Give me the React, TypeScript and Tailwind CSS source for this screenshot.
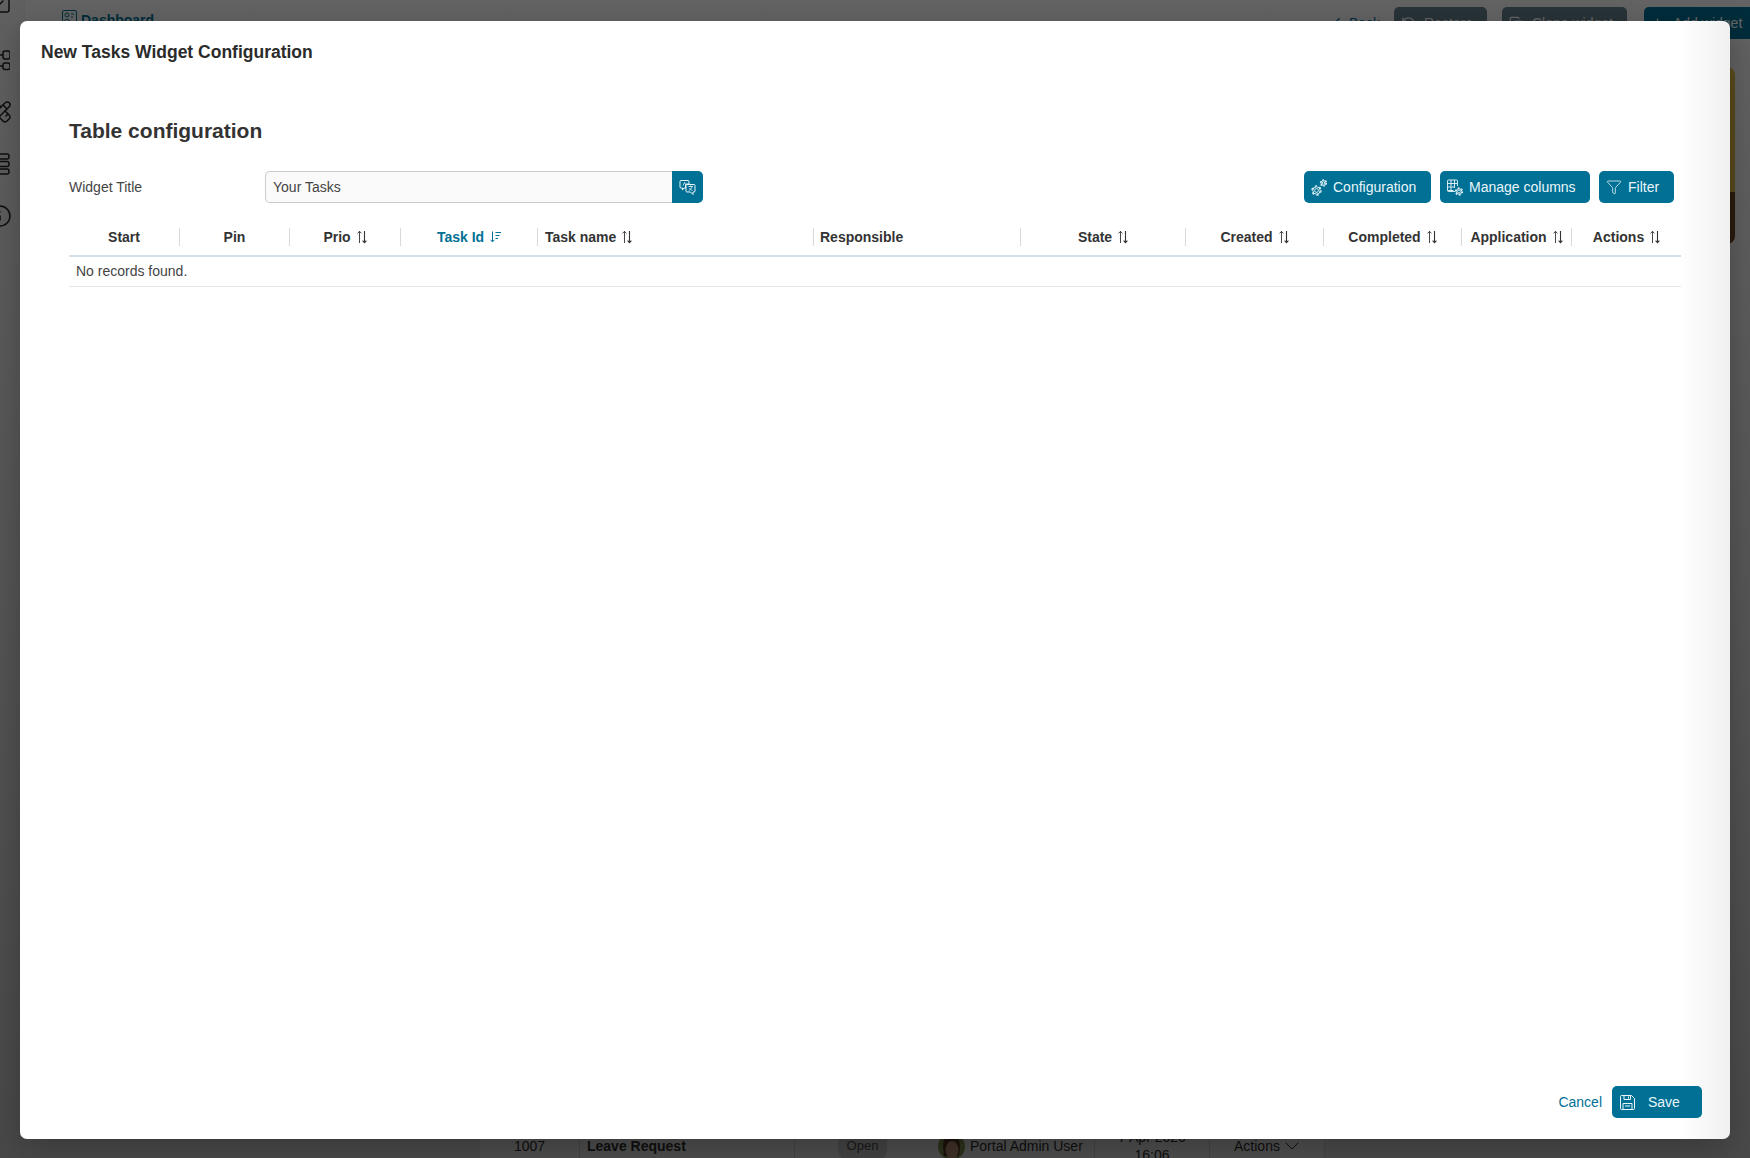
import React from "react";
import { ChevronDown, ChevronLeft, Copy, Funnel, Info, PencilRuler, Plus, RotateCcw, SquareCheck } from "lucide-react";

function Gear({ cx, cy, r }: { cx: number; cy: number; r: number }) {
  return (
    <g>
      <circle cx={cx} cy={cy} r={r * 0.42} />
      <circle cx={cx} cy={cy} r={r * 0.8} />
      <circle cx={cx} cy={cy} r={r} strokeDasharray={`${r * 0.5} ${r * 0.55}`} strokeWidth={1.3} />
    </g>
  );
}

function GearsIcon() {
  return (
    <svg width="16" height="17" viewBox="0 0 16 17" fill="none" stroke="currentColor" strokeWidth="0.9" className="shrink-0">
      <Gear cx={5.500} cy={11.500} r={4.600} />
      <Gear cx={12.500} cy={4} r={3.100} />
    </svg>
  );
}

function TableGearIcon() {
  return (
    <svg width="16" height="17" viewBox="0 0 16 17" fill="none" stroke="currentColor" strokeWidth="0.9" className="shrink-0">
      <path d="M8 12.500H1.500a1 1 0 0 1-1-1V2a1 1 0 0 1 1-1h8a1 1 0 0 1 1 1v5M.5 4.500h10M.5 8h7.500M.5 11.500h6M4 1v11.500M7.500 1v8" />
      <Gear cx={12} cy={12.500} r={3.500} />
    </svg>
  );
}

function TranslateIcon() {
  return (
    <svg width="17" height="17" viewBox="0 0 17 17" fill="none" stroke="currentColor" strokeWidth="1">
      <path d="M2 1.500h7a1 1 0 0 1 1 1V5H7.500a1 1 0 0 0-1 1v3H5L3.500 11V9H2a1 1 0 0 1-1-1V2.500a1 1 0 0 1 1-1Z" />
      <path d="M8 5.500h7a1 1 0 0 1 1 1V12a1 1 0 0 1-1 1h-1v2.500L11.500 13H8a1 1 0 0 1-1-1V6.500a1 1 0 0 1 1-1Z" />
      <path d="M4 6.500l1.500-3 1 2M9.500 7.500h4.500M11.700 6.500v1M13 7.500c-.5 2-1.700 3.500-3.300 4M10.500 9c.5 1 1.500 2 3 2.500" strokeWidth="0.8" />
    </svg>
  );
}

function FloppyIcon() {
  return (
    <svg width="15" height="15" viewBox="0 0 15 15" fill="none" stroke="currentColor" strokeWidth="1" className="shrink-0">
      <path d="M1.500.5h10l3 3v10a1 1 0 0 1-1 1h-12a1 1 0 0 1-1-1v-12a1 1 0 0 1 1-1Z" />
      <path d="M4 .5v4h6.500v-4M8.500 1.500v2" />
      <path d="M3 14.500V8.500h9v6M5 11h5" />
    </svg>
  );
}

function NodesIcon() {
  return (
    <svg width="24" height="24" viewBox="0 0 24 24" fill="none" stroke="currentColor" strokeWidth="1.5" className="shrink-0">
      <rect x="17" y="3" width="7" height="8" rx="2" />
      <rect x="17" y="15" width="7" height="6.500" rx="2" />
      <path d="M17 7h-3a2 2 0 0 0-2 2v7a2 2 0 0 0 2 2h3" />
    </svg>
  );
}

function RowsIcon() {
  return (
    <svg width="24" height="24" viewBox="0 0 24 24" fill="none" stroke="currentColor" strokeWidth="1.5" className="shrink-0">
      <rect x="1" y="2" width="22" height="5" rx="2" />
      <rect x="1" y="9.500" width="22" height="5" rx="2" />
      <rect x="1" y="17" width="22" height="5" rx="2" />
    </svg>
  );
}

function SortIcon() {
  return (
    <svg width="10" height="14" viewBox="0 0 10 14" fill="none" stroke="currentColor" strokeWidth="0.9" className="shrink-0">
      <path d="M2.500 13V1.200M.6 3.400l1.900-2.100 1.900 2.100" />
      <path d="M7.500 1v11.800M5.600 10.600l1.900 2.100 1.900-2.100" strokeWidth="1.100" />
    </svg>
  );
}

function SortActiveIcon() {
  return (
    <svg width="11" height="14" viewBox="0 0 11 14" fill="none" stroke="currentColor" strokeWidth="1" className="shrink-0">
      <path d="M2.500 1.500v10.500M.6 9.800l1.900 2.100 1.900-2.100" />
      <path d="M5.500 2.500H11M5.500 5.500h4M5.500 8.500h2.500" />
    </svg>
  );
}

function AvatarIcon() {
  return (
    <svg width="27" height="27" viewBox="0 0 27 27" className="shrink-0">
      <circle cx="13.500" cy="13.500" r="13.500" fill="#8fa35a" />
      <path d="M5 14C5 5 8 2 13.500 2S22 5 22 14l-1 9H6Z" fill="#5b3a24" />
      <ellipse cx="14" cy="17" rx="6.500" ry="9" fill="#cfa184" />
    </svg>
  );
}

const columns: { label: string; width: string; sort?: boolean; active?: boolean; left?: string }[] = [
  { label: "Start", width: "w-[110px]" },
  { label: "Pin", width: "w-[110px]" },
  { label: "Prio", width: "w-[111px]", sort: true },
  { label: "Task Id", width: "w-[137px]", sort: true, active: true },
  { label: "Task name", width: "w-[276px]", sort: true, left: "justify-start pl-[7px]" },
  { label: "Responsible", width: "w-[207px]", left: "justify-start pl-[6px]" },
  { label: "State", width: "w-[165px]", sort: true },
  { label: "Created", width: "w-[138px]", sort: true },
  { label: "Completed", width: "w-[138px]", sort: true },
  { label: "Application", width: "w-[110px]", sort: true },
  { label: "Actions", width: "w-[110px]", sort: true },
];

function Button({ icon, label, width }: { icon: React.ReactNode; label: string; width: string }) {
  return (
    <button className={`flex h-8 items-center gap-[6px] rounded-[5px] bg-[#007095] pl-[7px] text-sm text-[#eaf6fa] ${width}`}>
      {icon}
      {label}
    </button>
  );
}

export default function App() {
  return (
    <div className="relative flex h-screen overflow-hidden bg-white font-['Liberation_Sans',Arial,sans-serif] text-sm text-[#333333]">
      <aside className="flex w-[25px] shrink-0 flex-col overflow-hidden border-r border-[#eeeeee] bg-[#f0f0f0] text-[#222222]">
        <SquareCheck size={24} strokeWidth={1.5} className="-mt-[9px] mb-[33px] -ml-[12px] shrink-0" />
        <div className="-ml-[14px] flex flex-col gap-7">
          <NodesIcon />
          <PencilRuler size={24} strokeWidth={1.5} className="ml-[2px]" />
          <RowsIcon />
          <Info size={24} strokeWidth={1.5} className="ml-[2px]" />
        </div>
      </aside>

      <div className="flex min-w-0 flex-1 flex-col">
        <header className="flex h-[46px] items-start bg-[#f8f8f8] pt-[7px]">
          <div className="mt-[3px] ml-[37px] flex h-5 items-center gap-1 font-bold text-[#007095]">
            <PresentationIcon />
            Dashboard
          </div>
          <div className="-mr-[10px] ml-auto flex items-center">
            <span className="mr-[14px] flex items-center gap-[3px] text-[#007095]">
              <ChevronLeft size={18} strokeWidth={1.5} />
              Back
            </span>
            <span className="mr-[15px] flex h-8 w-[93px] items-center gap-2 rounded-[5px] bg-[#657f8c] pl-[7px] text-[#ffffff]">
              <RotateCcw size={15} />
              Restore
            </span>
            <span className="mr-[17px] flex h-8 w-[125px] items-center gap-2 rounded-[5px] bg-[#657f8c] pl-[7px] text-[#ffffff]">
              <Copy size={15} />
              Clone widget
            </span>
            <span className="flex h-8 w-[116px] items-center gap-2 rounded-[5px] bg-[#007095] pl-[6px] text-[#ffffff]">
              <Plus size={15} />
              Add widget
            </span>
          </div>
        </header>

        <main className="flex min-h-0 flex-1 flex-col bg-[#f4f4f4]">
          <div className="mt-[21px] mr-[15px] flex h-[177px] w-[220px] flex-col self-end overflow-hidden rounded-[8px]">
            <div className="flex-1 bg-[#e3bd48]" />
            <div className="h-[52px] bg-[#6f4523]" />
          </div>
          <div className="flex-1" />
          <div className="-mb-[10px] ml-[455px] flex h-[44px] w-[845px] items-center bg-white text-[#333333]">
            <div className="flex h-full w-[100px] items-center justify-center border-r border-[#dddddd]">1007</div>
            <div className="flex h-full w-[215px] items-center border-r border-[#dddddd] pl-[7px] font-bold">Leave Request</div>
            <div className="flex h-full w-[143px] items-center pl-[43px]">
              <span className="flex h-[26px] w-[49px] items-center justify-center rounded-[8px] bg-[#dddddd] text-[13px] text-[#555555]">Open</span>
            </div>
            <div className="flex h-full w-[157px] items-center gap-[5px] border-r border-[#dddddd]">
              <AvatarIcon />
              Portal Admin User
            </div>
            <div className="flex h-full w-[115px] flex-col items-center justify-center border-r border-[#dddddd] leading-[18px]">
              <span>7 Apr 2026</span>
              <span>16:06</span>
            </div>
            <div className="flex h-full w-[115px] items-center justify-center border-r border-[#dddddd] pl-[4px]">
              Actions
              <ChevronDown size={24} strokeWidth={1} />
            </div>
          </div>
        </main>
      </div>

      <div className="absolute inset-0 bg-gradient-to-b from-black/60 to-black/70" />

      <div
        role="dialog"
        className="absolute top-[21px] left-[20px] flex h-[1118px] w-[1710px] flex-col rounded-[7px] bg-[linear-gradient(to_right,#ffffff_calc(100%-50px),#f0f0f0)] shadow-[0_8px_30px_rgba(0,0,0,0.25)]"
      >
        <h2 className="pt-[18px] pl-[21px] text-[17.5px] leading-[26px] font-bold text-[#2b2b2b]">New Tasks Widget Configuration</h2>

        <div className="mt-[52px] flex flex-col px-[49px]">
          <h3 className="text-[21px] leading-[28px] font-bold text-[#333333]">Table configuration</h3>

          <div className="mt-[26px] flex h-8 items-center">
            <label className="w-[196px] text-[#444444]">Widget Title</label>
            <div className="flex h-8 w-[438px]">
              <div className="flex min-w-0 flex-1 items-center rounded-l-[5px] border border-r-0 border-[#cccccc] bg-[#fafafa] pl-[7px] text-[#444444]">Your Tasks</div>
              <button className="flex w-[31px] items-center justify-center rounded-r-[5px] bg-[#007095] text-[#eaf6fa]">
                <TranslateIcon />
              </button>
            </div>
            <div className="mr-[7px] ml-auto flex items-center gap-[9px]">
              <Button icon={<GearsIcon />} label="Configuration" width="w-[127px]" />
              <Button icon={<TableGearIcon />} label="Manage columns" width="w-[150px]" />
              <Button icon={<Funnel size={16} strokeWidth={1.2} className="shrink-0" />} label="Filter" width="w-[75px]" />
            </div>
          </div>

          <table className="mt-[25px] w-[1612px] table-fixed border-collapse">
            <colgroup>
              {columns.map((c) => (
                <col key={c.label} className={c.width} />
              ))}
            </colgroup>
            <thead>
              <tr className="border-b-2 border-[#d3e2e7]">
                {columns.map((c, i) => (
                  <th key={c.label} className="p-0 pb-[9px] font-bold">
                    <div
                      className={`flex h-[18px] items-center gap-[6px] ${i > 0 ? "border-l border-[#d9d9d9]" : ""} ${c.left ?? "justify-center"} ${c.active ? "text-[#007095]" : "text-[#333333]"}`}
                    >
                      {c.label}
                      {c.sort && (c.active ? <SortActiveIcon /> : <SortIcon />)}
                    </div>
                  </th>
                ))}
              </tr>
            </thead>
            <tbody>
              <tr className="border-b border-[#e5e9eb]">
                <td colSpan={11} className="h-[30px] px-[7px] py-0 text-[#444444]">
                  No records found.
                </td>
              </tr>
            </tbody>
          </table>
        </div>

        <div className="mt-auto flex items-center justify-end gap-[10px] pr-[28px] pb-[21px]">
          <button className="text-[#007095]">Cancel</button>
          <button className="flex h-8 w-[90px] items-center gap-[13px] rounded-[5px] bg-[#007095] pl-[8px] text-[#eaf6fa]">
            <FloppyIcon />
            Save
          </button>
        </div>
      </div>
    </div>
  );
}

function PresentationIcon() {
  return (
    <svg width="15" height="15" viewBox="0 0 15 15" fill="none" stroke="currentColor" strokeWidth="1" className="-mt-[6px] shrink-0">
      <rect x="0.500" y="0.500" width="14" height="12" rx="1.500" />
      <circle cx="5" cy="5" r="2" />
      <path d="M9 4h3M9 7h2M2 11c1-2 5-2 6 0" />
    </svg>
  );
}
